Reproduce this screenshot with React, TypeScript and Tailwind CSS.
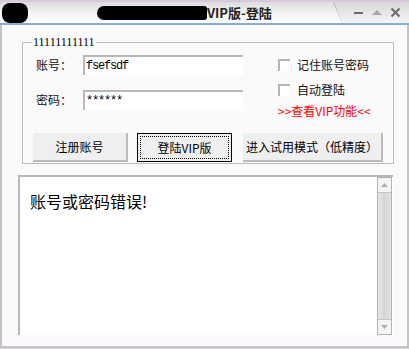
import React from 'react';

const cjk = '"Noto Sans CJK SC", "Liberation Sans", sans-serif';

function Checkbox({ label }: { label: string }) {
  return (
    <div className="flex h-[12px] items-center">
      <span className="h-[12px] w-[12px] border-l-2 border-t-2 border-[#b4b4b4] bg-white" />
      <span className="ml-[7px] text-[12px] leading-[14px] text-[#111]">{label}</span>
    </div>
  );
}

export default function App() {
  return (
    <div
      className="h-[349px] w-[409px] overflow-hidden bg-[#d6c9d8] pt-[2px]"
      style={{ fontFamily: cjk }}
    >
      <div className="flex h-[346px] w-[409px] flex-col">
        {/* Title bar */}
        <div className="flex h-[23px] items-center border-b-2 border-[#86aed6] bg-gradient-to-b from-[#dcdcdc] via-[#f2f2f2] to-[#ffffff] rounded-tl-[4px]">
          {/* redacted icon */}
          <div className="ml-[2px] h-[20px] w-[26px] rounded-[8px] bg-black" />
          <div className="ml-[69px] flex items-center">
            <div className="h-[14px] w-[110px] rounded-l-[7px] rounded-r-[3px] bg-black" />
            <span className="text-[13px] font-bold leading-none text-[#222]">VIP版-登陆</span>
          </div>
          <div className="ml-auto flex h-full w-[76px] items-center bg-gradient-to-b from-[#d8d8d8] to-[#f4f4f4] [clip-path:polygon(0_0,100%_0,100%_100%,9px_100%)]">
            <svg width="76" height="21" viewBox="0 0 76 21">
              <line x1="0.5" y1="0" x2="8.5" y2="21" stroke="#b0b0b0" strokeWidth="1" />
              <rect x="21" y="10" width="9" height="2" fill="#6c6c6c" />
              <path d="M39 13 L44 8 L49 13 Z" fill="#a8a8a8" />
              <path d="M58.5 6.5 L66.5 14.5 M66.5 6.5 L58.5 14.5" stroke="#6c6c6c" strokeWidth="2" />
            </svg>
          </div>
        </div>

        {/* Body */}
        <div className="flex flex-1 flex-col border-x-2 border-b-2 border-[#c4c4c4] bg-[#fafafa]">
          {/* Group box */}
          <div className="relative ml-[20px] mt-[17px] h-[122px] w-[372px] border border-[#bdbdbd]">
            <span
              className="absolute left-[9px] top-[-8px] bg-[#fafafa] px-[1px] text-[12px] leading-[14px] text-black"
              style={{ fontFamily: '"Liberation Serif", serif' }}
            >
              11111111111
            </span>

            <div className="flex pl-[13px] pt-[12px]">
              <div className="flex flex-col gap-[15px]">
                <div className="flex h-[20px] items-center">
                  <span className="w-[47px] text-[12px] text-[#111]">账号：</span>
                  <div
                    className="flex h-[20px] w-[160px] items-center border-l-2 border-t-2 border-[#b8b8b8] bg-white pl-[1px] text-[12px] tracking-[-1.2px] text-black"
                    style={{ fontFamily: '"Liberation Mono", monospace' }}
                  >
                    fsefsdf
                  </div>
                </div>
                <div className="flex h-[20px] items-center">
                  <span className="w-[47px] text-[12px] text-[#111]">密码：</span>
                  <div
                    className="flex h-[20px] w-[160px] items-center border-l-2 border-t-2 border-[#b8b8b8] bg-white pl-[1px] text-[12px] tracking-[-1.2px] text-black"
                    style={{ fontFamily: '"Liberation Mono", monospace' }}
                  >
                    ******
                  </div>
                </div>
              </div>

              <div className="ml-[35px] flex flex-col gap-[13px] pt-[4px]">
                <Checkbox label="记住账号密码" />
                <Checkbox label="自动登陆" />
                <span className="mt-[-5px] text-[12px] leading-[14px] text-[#ff0000]">
                  {'>>'}查看VIP功能{'<<'}
                </span>
              </div>
            </div>

            <div className="mt-[15px] flex pl-[10px]">
              <button className="flex h-[29px] w-[95px] items-center justify-center border-b-2 border-r-2 border-[#bcbcbc] bg-[#efefef] text-[12px] text-black">
                注册账号
              </button>
              <button className="ml-[9px] flex h-[29px] w-[95px] items-center justify-center border border-black bg-[#efefef] p-[2px]">
                <span className="flex h-full w-full items-center justify-center border border-dotted border-black text-[12px] text-black">
                  登陆VIP版
                </span>
              </button>
              <button className="ml-[11px] flex h-[29px] w-[140px] items-center justify-center border-b-2 border-r-2 border-[#bcbcbc] bg-[#efefef] text-[12px] text-black">
                进入试用模式（低精度）
              </button>
            </div>
          </div>

          {/* Message area */}
          <div className="ml-[16px] mt-[11px] flex h-[160px] w-[375px] border-l-2 border-t-2 border-[#b8b8b8] bg-white">
            <div className="flex-1 pl-[10px] pt-[14px] text-[16px] leading-[20px] text-black">
              账号或密码错误!
            </div>
            <div className="mr-[1px] flex w-[15px] flex-col border border-[#b4b4b4]">
              <div className="flex h-[15px] items-center justify-center border-b border-[#c4c4c4] bg-[#f4f4f4]">
                <svg width="7" height="4" viewBox="0 0 7 4">
                  <path d="M0 4 L3.5 0 L7 4 Z" fill="#b0b0b0" />
                </svg>
              </div>
              <div className="flex-1 bg-gradient-to-r from-[#e6e6e6] via-[#d6d6d6] to-[#e2e2e2]" />
              <div className="flex h-[15px] items-center justify-center border-t border-[#c4c4c4] bg-[#f4f4f4]">
                <svg width="7" height="4" viewBox="0 0 7 4">
                  <path d="M0 0 L3.5 4 L7 0 Z" fill="#b0b0b0" />
                </svg>
              </div>
            </div>
          </div>
        </div>
      </div>
    </div>
  );
}
